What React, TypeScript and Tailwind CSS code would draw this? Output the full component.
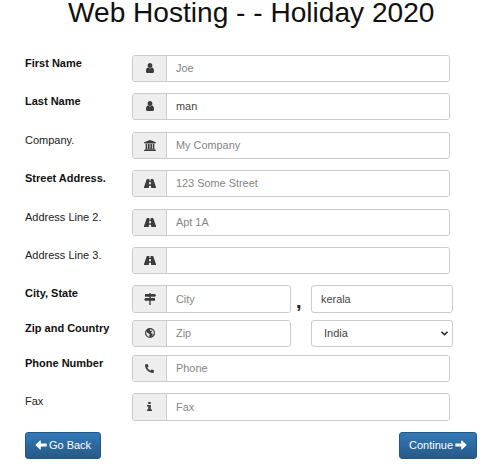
import type { ReactNode } from "react";
import { FaPhone } from "react-icons/fa";

const UserIcon = () => (
  <svg viewBox="256 128 1280 1536" preserveAspectRatio="none" className="h-[10px] w-[8px]" fill="currentColor">
    <path d="M1536 1399q0 109-62.5 187t-150.5 78h-854q-88 0-150.5-78t-62.5-187q0-85 8.5-160.5t31.5-152 58.5-131 94-89 134.5-34.5q131 128 313 128t313-128q76 0 134.5 34.5t94 89 58.5 131 31.5 152 8.5 160.5zm-256-887q0 159-112.5 271.5t-271.5 112.5-271.5-112.5-112.5-271.5 112.5-271.5 271.5-112.5 271.5 112.5 112.5 271.5z" />
  </svg>
);

const BankIcon = () => (
  <svg viewBox="0 0 30 28" className="h-[11px] w-[12px]" fill="currentColor">
    <path d="M15 0L30 6V8H28L27 9H3L2 8H0V6ZM4 10H8V22H10V10H14V22H16V10H20V22H22V10H26V22H27L28 23V24H2V23L3 22H4ZM1 25H29L30 26V28H0V26Z" />
  </svg>
);

const RoadIcon = () => (
  <svg viewBox="0 0 30 22" preserveAspectRatio="none" className="h-[9px] w-[12px]" fill="currentColor">
    <path fillRule="evenodd" d="M8 0H13.500L13.200 4.500H16.800L16.500 0H22Q23 0 23.500 1L29.700 19Q30.600 22 29 22H18L17.500 16.500H12.500L12 22H1Q-.6 22 .3 19L6.500 1Q7 0 8 0ZM13 7.500L12.500 13H17.500L17 7.500Z" />
  </svg>
);

const SignsIcon = () => (
  <svg viewBox="0 0 12 12" className="size-[12px]" fill="currentColor">
    <path d="M5.300 0H6.700V1H11L12 2.400L11 3.800H6.700V5H11V7.800H6.700V12H5.300V7.800H1.200L.2 6.400L1.200 5H5.300V3.800H1V1H5.300Z" />
  </svg>
);

const GlobeIcon = () => (
  <svg viewBox="0 0 24 24" className="size-[10px]" fill="currentColor">
    <path fillRule="evenodd" d="M12 0A12 12 0 1 1 12 24A12 12 0 1 1 12 0ZM14 3L11 5L13 7L17 6L18 8L14 11L16 13L19 13L18 17L14 21Q21 19 21.500 12Q21 5 14 3ZM4 7Q1.500 12 4 16Q6 20 11 21.500L10 18L12 16L9 13L6 12Z" />
  </svg>
);

const InfoIcon = () => (
  <svg viewBox="0 0 10 20" preserveAspectRatio="none" className="h-[9px] w-[5px]" fill="currentColor">
    <path d="M2.500 0H7.500V4.500H2.500ZM0 6.500H7.500V16.500H10V20H0V16.500H2.500V10H0Z" />
  </svg>
);

const Arrow = ({ flip = false }: { flip?: boolean }) => (
  <svg viewBox="0 0 12 10" className={flip ? "mb-px h-[10px] w-[12px] rotate-180" : "mb-px h-[10px] w-[12px]"} fill="currentColor">
    <path d="M.3 5L5 .6Q5.800 .1 5.800 1V3.500H11.200Q11.700 3.500 11.700 4V6Q11.700 6.500 11.200 6.500H5.800V9Q5.800 9.900 5 9.400Z" />
  </svg>
);

function Field({ icon, value = "", placeholder = "", width = "w-[318px]", height = "h-[27px]" }: {
  icon: ReactNode; value?: string; placeholder?: string; width?: string; height?: string;
}) {
  return (
    <div className={`flex overflow-hidden rounded-[3px] border border-[#ccc] ${width} ${height}`}>
      <span className="flex w-[34px] shrink-0 items-center justify-center border-r border-[#ccc] bg-[#eee] pb-px text-[#3c3c3c]">{icon}</span>
      <input
        className="min-w-0 flex-1 bg-white px-[9px] text-[10.9px] text-[#444] outline-none placeholder:text-[#858585]"
        defaultValue={value}
        placeholder={placeholder}
      />
    </div>
  );
}

function Row({ label, bold = false, height, children }: { label: string; bold?: boolean; height: string; children: ReactNode }) {
  return (
    <div className={`flex items-start ${height}`}>
      <label className={`w-[107px] shrink-0 pt-px text-[11px] leading-[15px] ${bold ? "font-bold text-[#111]" : "text-[#222]"}`}>{label}</label>
      {children}
    </div>
  );
}

const button =
  "flex h-[27px] items-center justify-center gap-[2px] rounded-[3px] border border-[#245580] bg-linear-to-b from-[#337ab7] to-[#265a88] text-[11px] text-white";

export default function App() {
  return (
    <main className="h-[466px] w-[490px] overflow-hidden bg-white pl-[25px] font-['Liberation_Sans',Arial,sans-serif]">
      <h1 className="h-[55px] pl-[43px] text-[28.1px] leading-[25px] whitespace-nowrap text-[#111]">Web Hosting - - Holiday 2020</h1>
      <Row label="First Name" bold height="h-[38px]"><Field icon={<UserIcon />} placeholder="Joe" /></Row>
      <Row label="Last Name" bold height="h-[39px]"><Field icon={<UserIcon />} value="man" /></Row>
      <Row label="Company." height="h-[38px]"><Field icon={<BankIcon />} placeholder="My Company" /></Row>
      <Row label="Street Address." bold height="h-[39px]"><Field icon={<RoadIcon />} placeholder="123 Some Street" /></Row>
      <Row label="Address Line 2." height="h-[38px]"><Field icon={<RoadIcon />} placeholder="Apt 1A" /></Row>
      <Row label="Address Line 3." height="h-[38px]"><Field icon={<RoadIcon />} /></Row>
      <Row label="City, State" bold height="h-[35px]">
        <Field icon={<SignsIcon />} placeholder="City" width="w-[159px]" height="h-[28px]" />
        <span className="w-[20px] pt-[4px] pl-[5px] text-[20px] leading-[24px] font-bold text-[#222]">,</span>
        <input className="h-[28px] w-[142px] rounded-[3px] border border-[#ccc] px-[9px] text-[10.9px] text-[#444] outline-none" defaultValue="kerala" />
      </Row>
      <Row label="Zip and Country" bold height="h-[35px]">
        <Field icon={<GlobeIcon />} placeholder="Zip" width="w-[159px]" />
        <div className="ml-[20px] flex h-[27px] w-[142px] items-center justify-between rounded-[3px] border border-[#ccc] pr-[4px] pl-[12px] text-[11px] text-[#444]">
          India
          <svg viewBox="0 0 7 5" className="h-[5px] w-[7px]" fill="none" stroke="#222" strokeWidth="1.500"><path d="M.5 .7L3.500 3.700L6.500 .7" /></svg>
        </div>
      </Row>
      <Row label="Phone Number" bold height="h-[38px]"><Field icon={<FaPhone className="size-[9px] -scale-x-100" />} placeholder="Phone" /></Row>
      <Row label="Fax" height="h-[39px]"><Field icon={<InfoIcon />} placeholder="Fax" height="h-[28px]" /></Row>
      <div className="flex w-[452px] justify-between">
        <button className={`${button} w-[76px]`}><Arrow />Go Back</button>
        <button className={`${button} w-[78px]`}>Continue<Arrow flip /></button>
      </div>
    </main>
  );
}
